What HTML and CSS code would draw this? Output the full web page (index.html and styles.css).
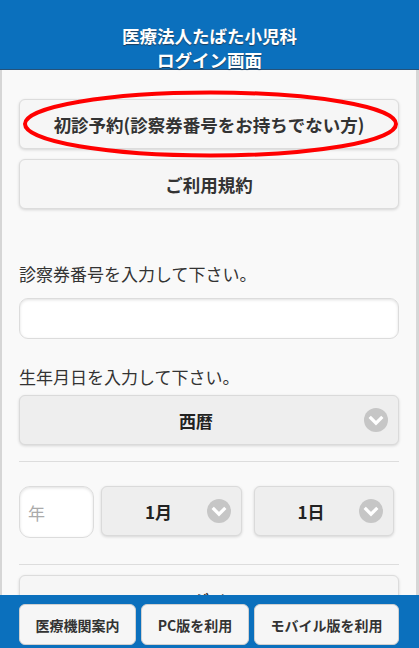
FILE: index.html
```html
<!DOCTYPE html>
<html lang="ja">
<head>
<meta charset="utf-8">
<title>ログイン画面</title>
<link rel="stylesheet" href="styles.css">
</head>
<body>
<header class="header">
  <h1 class="title">医療法人たばた小児科<br>ログイン画面</h1>
</header>
<main class="content">
  <a class="btn btn-first">初診予約(診察券番号をお持ちでない方)</a>
  <a class="btn btn-terms">ご利用規約</a>
  <p class="label label-card">診察券番号を入力して下さい。</p>
  <div class="input input-card"></div>
  <p class="label label-birth">生年月日を入力して下さい。</p>
  <div class="select select-era"><span class="select-text">西暦</span><span class="chev"><svg viewBox="0 0 24 24" width="24" height="24"><circle cx="12" cy="12" r="12" fill="#c6c6c6"/><path d="M6.8 10 L12 15.2 L17.2 10" fill="none" stroke="#fff" stroke-width="3.2" stroke-linecap="square"/></svg></span></div>
  <hr class="rule">
  <div class="date-row">
    <div class="input input-year"><span class="ph">年</span></div>
    <div class="select select-month"><span class="select-text">1月</span><span class="chev"><svg viewBox="0 0 24 24" width="24" height="24"><circle cx="12" cy="12" r="12" fill="#c6c6c6"/><path d="M6.8 10 L12 15.2 L17.2 10" fill="none" stroke="#fff" stroke-width="3.2" stroke-linecap="square"/></svg></span></div>
    <div class="select select-day"><span class="select-text">1日</span><span class="chev"><svg viewBox="0 0 24 24" width="24" height="24"><circle cx="12" cy="12" r="12" fill="#c6c6c6"/><path d="M6.8 10 L12 15.2 L17.2 10" fill="none" stroke="#fff" stroke-width="3.2" stroke-linecap="square"/></svg></span></div>
  </div>
  <hr class="rule rule-2">
  <a class="btn btn-login">ログイン</a>
  <svg class="mark" width="380" height="72" viewBox="0 0 380 72"><ellipse cx="189.5" cy="34" rx="185.5" ry="31.5" fill="none" stroke="#ff0000" stroke-width="4"/></svg>
</main>
<footer class="footer">
  <a class="fbtn fbtn-1">医療機関案内</a>
  <a class="fbtn fbtn-2">PC版を利用</a>
  <a class="fbtn fbtn-3">モバイル版を利用</a>
</footer>
</body>
</html>
```
FILE: styles.css
```css
html, body {
  margin: 0;
  padding: 0;
}
body {
  background: #f9f9f9;
  font-family: "Noto Sans CJK JP", "Noto Sans", sans-serif;
  color: #333;
  width: 419px;
  height: 648px;
  overflow: hidden;
}
.header {
  height: 70px;
  box-sizing: border-box;
  background: #0b70bd;
  border-bottom: 1px solid #25527a;
  padding-top: 24px;
  text-align: center;
}
.title {
  margin: 0;
  font-size: 17.5px;
  line-height: 24px;
  font-weight: bold;
  color: #fff;
  text-shadow: 0 1px 1px #1d3d5c;
}
.content {
  position: relative;
  border-left: 2px solid #d6d6d6;
  border-right: 3px solid #d6d6d6;
  padding: 0 17px;
  height: 577px;
  box-sizing: border-box;
  overflow: hidden;
}
.btn {
  display: flex;
  align-items: center;
  justify-content: center;
  height: 50px;
  box-sizing: border-box;
  background: #f6f6f6;
  border: 1px solid #dcdcdc;
  border-radius: 6px;
  box-shadow: 0 1px 3px rgba(0,0,0,0.15);
  font-size: 17.5px;
  font-weight: bold;
  color: #333;
}
.btn-first { margin-top: 29px; }
.btn-terms { margin-top: 10px; }
.btn-login { margin-top: 10px; }
.label {
  margin: 0;
  font-size: 17px;
  line-height: 24px;
  color: #333;
}
.label-card { margin-top: 53px; }
.label-birth { margin-top: 26px; }
.input {
  box-sizing: border-box;
  background: #fff;
  border: 1px solid #dcdcdc;
  border-radius: 9px;
  box-shadow: inset 0 1px 3px rgba(0,0,0,0.12);
}
.input-card {
  height: 41px;
  margin-top: 12px;
}
.select {
  position: relative;
  display: flex;
  align-items: center;
  justify-content: center;
  height: 50px;
  box-sizing: border-box;
  padding: 0 42px 0 16px;
  background: #eeeeee;
  border: 1px solid #dadada;
  border-radius: 6px;
  box-shadow: 0 1px 3px rgba(0,0,0,0.15);
  font-size: 17px;
  font-weight: bold;
  color: #222;
}
.select-era { margin-top: 6px; }
.chev {
  position: absolute;
  right: 10px;
  top: 50%;
  margin-top: -12px;
  width: 24px;
  height: 24px;
  display: block;
}
.chev svg { display: block; }
.rule {
  border: 0;
  border-top: 1px solid #dddddd;
  margin: 16px 0 0;
  height: 0;
}
.rule-2 { margin-top: 26px; }
.date-row {
  display: flex;
  align-items: flex-start;
  margin-top: 24px;
}
.input-year {
  width: 75px;
  height: 52px;
  border-radius: 11px;
  display: flex;
  align-items: center;
  padding-left: 8px;
}
.ph {
  font-size: 17px;
  color: #aaa;
}
.select-month {
  width: 141px;
  margin-left: 7px;
}
.select-day {
  width: 140px;
  margin-left: 12px;
}
.mark {
  position: absolute;
  left: 19px;
  top: 20px;
  pointer-events: none;
}
.footer {
  position: fixed;
  left: 0;
  bottom: 0;
  width: 419px;
  height: 53px;
  box-sizing: border-box;
  background: #0b70bd;
  padding: 9px 20px 0 19px;
  display: flex;
  gap: 5px;
}
.fbtn {
  display: flex;
  align-items: center;
  justify-content: center;
  height: 41px;
  box-sizing: border-box;
  padding: 0 15px;
  flex: 1 1 auto;
  background: #f6f6f6;
  border: 1px solid #d0d0d0;
  border-radius: 6px;
  font-size: 14px;
  font-weight: bold;
  color: #333;
  white-space: nowrap;
}
```
